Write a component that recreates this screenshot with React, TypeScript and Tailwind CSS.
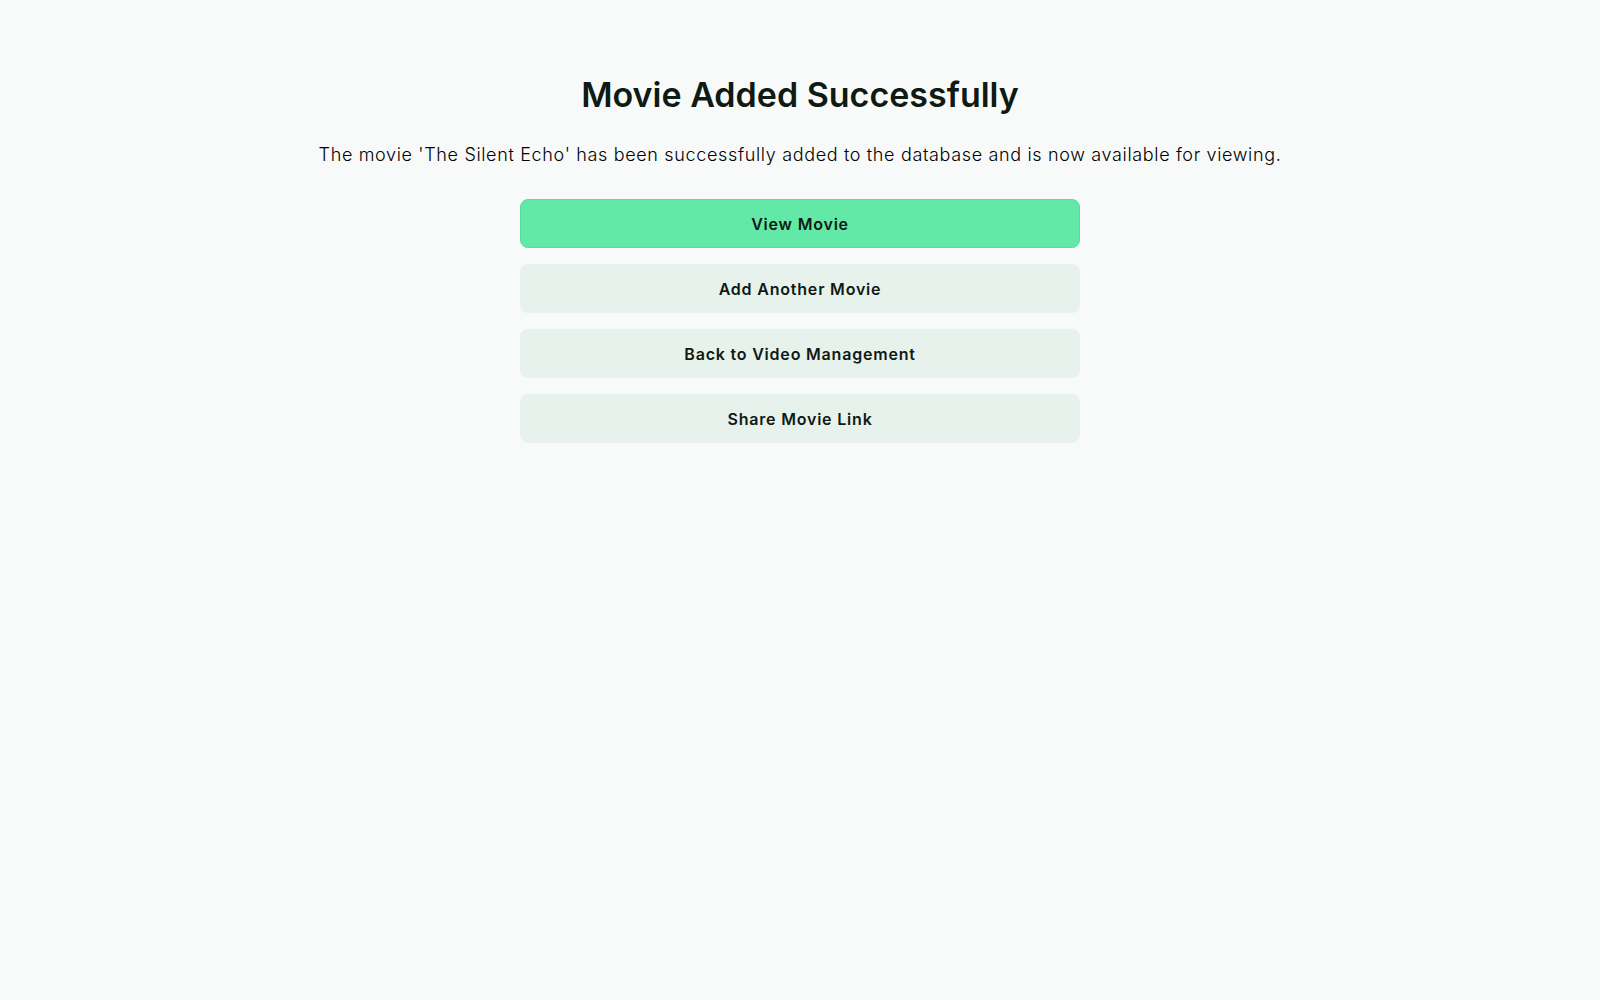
import React from "react";

export default function App() {
  const buttons = [
    { label: "View Movie", primary: true },
    { label: "Add Another Movie" },
    { label: "Back to Video Management" },
    { label: "Share Movie Link" },
  ];
  return (
    <div
      className="min-h-[1000px] w-full bg-[#f8faf9] text-[#0e1a13]"
      style={{ fontFamily: "Inter, 'Noto Sans', sans-serif" }}
    >
      <div className="flex flex-col items-center pt-[70px]">
        <h1 className="text-[34px] font-semibold leading-[50px] tracking-[0px] text-[#0e1a13]">
          Movie Added Successfully
        </h1>
        <p className="mt-[22px] text-[18px] font-light leading-[26px] text-[#000000] tracking-[0.65px]">
          The movie 'The Silent Echo' has been successfully added to the database and is now available for viewing.
        </p>
        <div className="mt-[31px] flex w-[560px] flex-col gap-4">
          {buttons.map((b) => (
            <button
              key={b.label}
              className={
                b.primary
                  ? "flex h-[49px] w-full items-center justify-center rounded-lg border border-[#5cdc9e] bg-[#63e9a7] text-[16px] font-semibold tracking-[0.8px] text-[#0e1a13]"
                  : "flex h-[49px] w-full items-center justify-center rounded-lg bg-[#e8f2ed] text-[16px] font-semibold tracking-[0.8px] text-[#0e1a13]"
              }
            >
              {b.label}
            </button>
          ))}
        </div>
      </div>
    </div>
  );
}
